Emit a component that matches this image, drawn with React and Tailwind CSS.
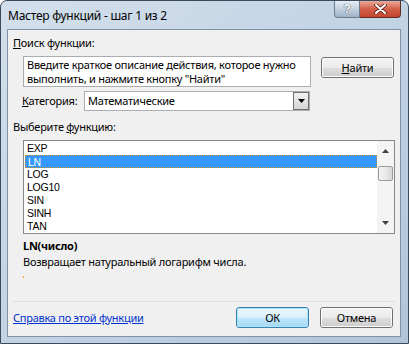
import React from "react";

const ui = { fontFamily: '"Noto Sans", "Open Sans", sans-serif', letterSpacing: "-0.25px" };
const ls = { fontFamily: '"Liberation Sans", Arial, sans-serif' };

function Btn({ children, primary, className = "" }) {
  return (
    <div
      className={
        "relative flex h-[21px] w-[73px] items-center justify-center rounded-[3px] border text-[11px] text-black " +
        (primary ? "border-[#3c7fb1] " : "border-[#707070] ") +
        className
      }
      style={ui}
    >
      <div
        className={
          "absolute inset-0 rounded-[2px] border " +
          (primary ? "border-[#a5e6fb] " : "border-[#fbfbfb] ")
        }
      />
      <div className="absolute inset-[1px] flex flex-col overflow-hidden rounded-[1px]">
        <div className={"h-1/2 " + (primary ? "bg-gradient-to-b from-[#eaf6fd] to-[#d9f0fc]" : "bg-gradient-to-b from-[#f2f2f2] to-[#ebebeb]")} />
        <div className={"h-1/2 " + (primary ? "bg-gradient-to-b from-[#bee6fd] to-[#a7d9f5]" : "bg-gradient-to-b from-[#dddddd] to-[#cfcfcf]")} />
      </div>
      <span className="relative leading-none">{children}</span>
    </div>
  );
}

export default function App() {
  const items = ["EXP", "LN", "LOG", "LOG10", "SIN", "SINH", "TAN"];
  return (
    <div
      className="relative flex h-[344px] w-[409px] flex-col overflow-hidden rounded-t-[7px] border border-[#3b4b5e] bg-gradient-to-br from-[#d3dfec] via-[#c2d3e4] to-[#b0c5da]"
      style={ui}
    >
      {/* title bar */}
      <div className="flex h-[28px] shrink-0 items-start justify-between">
        <div className="pl-[7px] pt-[6px] text-[12px] leading-[18px] text-black">Мастер функций - шаг 1 из 2</div>
        <div className="mr-[7px] flex">
          <div className="relative flex h-[17px] w-[26px] items-center justify-center rounded-bl-[4px] border border-t-0 border-[#6c7a8a] bg-gradient-to-b from-[#e6edf5] via-[#c4d1de] to-[#9fb2c6]">
            <span className="text-[12px] font-bold leading-none text-white [text-shadow:0_0_1px_#38465a,0_0_1px_#38465a]" style={ls}>?</span>
          </div>
          <div className="relative flex h-[17px] w-[41px] items-center justify-center rounded-br-[4px] border border-l-0 border-t-0 border-[#5e2a22] bg-gradient-to-b from-[#e9a99a] via-[#d25f48] to-[#c4452c]">
            <svg width="13" height="10" viewBox="0 0 13 10">
              <path d="M2 1 L11 9 M11 1 L2 9" stroke="#5a2117" strokeWidth="3.6" strokeLinecap="round" />
              <path d="M2 1 L11 9 M11 1 L2 9" stroke="#ffffff" strokeWidth="2" strokeLinecap="round" />
            </svg>
          </div>
        </div>
      </div>

      {/* client */}
      <div className="mx-[6px] flex h-[308px] w-[394px] flex-col border border-[#8192a8] bg-[#f0f0f0] text-[11px] text-black">
        <div className="ml-[5px] mt-[5px] leading-[16px]"><span className="underline">П</span>оиск функции:</div>

        <div className="mt-[5px] flex items-start">
          <div className="ml-[15px] h-[31px] w-[288px] border border-[#abadb3] bg-white px-[3px] pt-[1px] leading-[14px]">
            Введите краткое описание действия, которое нужно выполнить, и нажмите кнопку "Найти"
          </div>
          <Btn className="ml-[10px] mt-[1px]"><span><span className="underline">Н</span>айти</span></Btn>
        </div>

        <div className="mt-[4px] flex items-center">
          <div className="ml-[14px] w-[62px] leading-[16px]"><span className="underline">К</span>атегория:</div>
          <div className="flex h-[20px] w-[226px] items-center border border-[#abadb3] bg-white">
            <div className="flex-1 pl-[3px] leading-[16px]">Математические</div>
            <div className="flex h-[18px] w-[16px] items-center justify-center border border-[#707070] bg-gradient-to-b from-[#f2f2f2] to-[#d4d4d4]">
              <svg width="7" height="4" viewBox="0 0 7 4"><path d="M0 0 H7 L3.5 4 Z" fill="#000" /></svg>
            </div>
          </div>
        </div>

        <div className="ml-[5px] mt-[8px] leading-[16px]">Выберите <span className="underline">ф</span>ункцию:</div>

        <div className="ml-[15px] mt-[5px] flex h-[94px] w-[372px] border border-[#828790] bg-white">
          <div className="flex-1 pt-[1px] pl-[1px]">
            {items.map((it) => (
              <div
                key={it}
                className={
                  "h-[13px] pl-[2px] text-[10.5px] leading-[13px] " +
                  (it === "LN" ? "border border-dotted border-[#c88a2e] bg-[#3399ff] pl-[1px] leading-[11px] text-white" : "")
                }
                style={ls}
              >
                {it}
              </div>
            ))}
          </div>
          <div className="flex w-[17px] flex-col items-center bg-[#f4f4f4] pt-[8px]">
            <svg width="7" height="4" viewBox="0 0 7 4"><path d="M0 4 H7 L3.5 0 Z" fill="#404040" /></svg>
            <div className="mt-[13px] h-[15px] w-[15px] rounded-[2px] border border-[#9a9a9a] bg-gradient-to-r from-[#f3f3f3] via-[#e9e9e9] to-[#d6d6d6]" />
            <div className="flex-1" />
            <div className="mb-[8px]">
              <svg width="7" height="4" viewBox="0 0 7 4"><path d="M0 0 H7 L3.5 4 Z" fill="#404040" /></svg>
            </div>
          </div>
        </div>

        <div className="ml-[15px] mt-[4px] font-bold leading-[16px]">LN(число)</div>
        <div className="ml-[15px] leading-[16px]">Возвращает натуральный логарифм числа.</div>
        <div className="ml-[15px] mt-[6px] h-[2px] w-[1px] bg-[#ff9a2e]" />

        <div className="ml-[5px] mt-[23px] h-[1px] w-[382px] bg-[#d5dfe5]" />

        <div className="mt-[5px] flex items-center">
          <div className="ml-[5px] flex-1 leading-[16px] text-[#0033cc] underline">Справка по этой функции</div>
          <Btn primary>ОК</Btn>
          <Btn className="ml-[11px] mr-[7px]">Отмена</Btn>
        </div>
      </div>
    </div>
  );
}
